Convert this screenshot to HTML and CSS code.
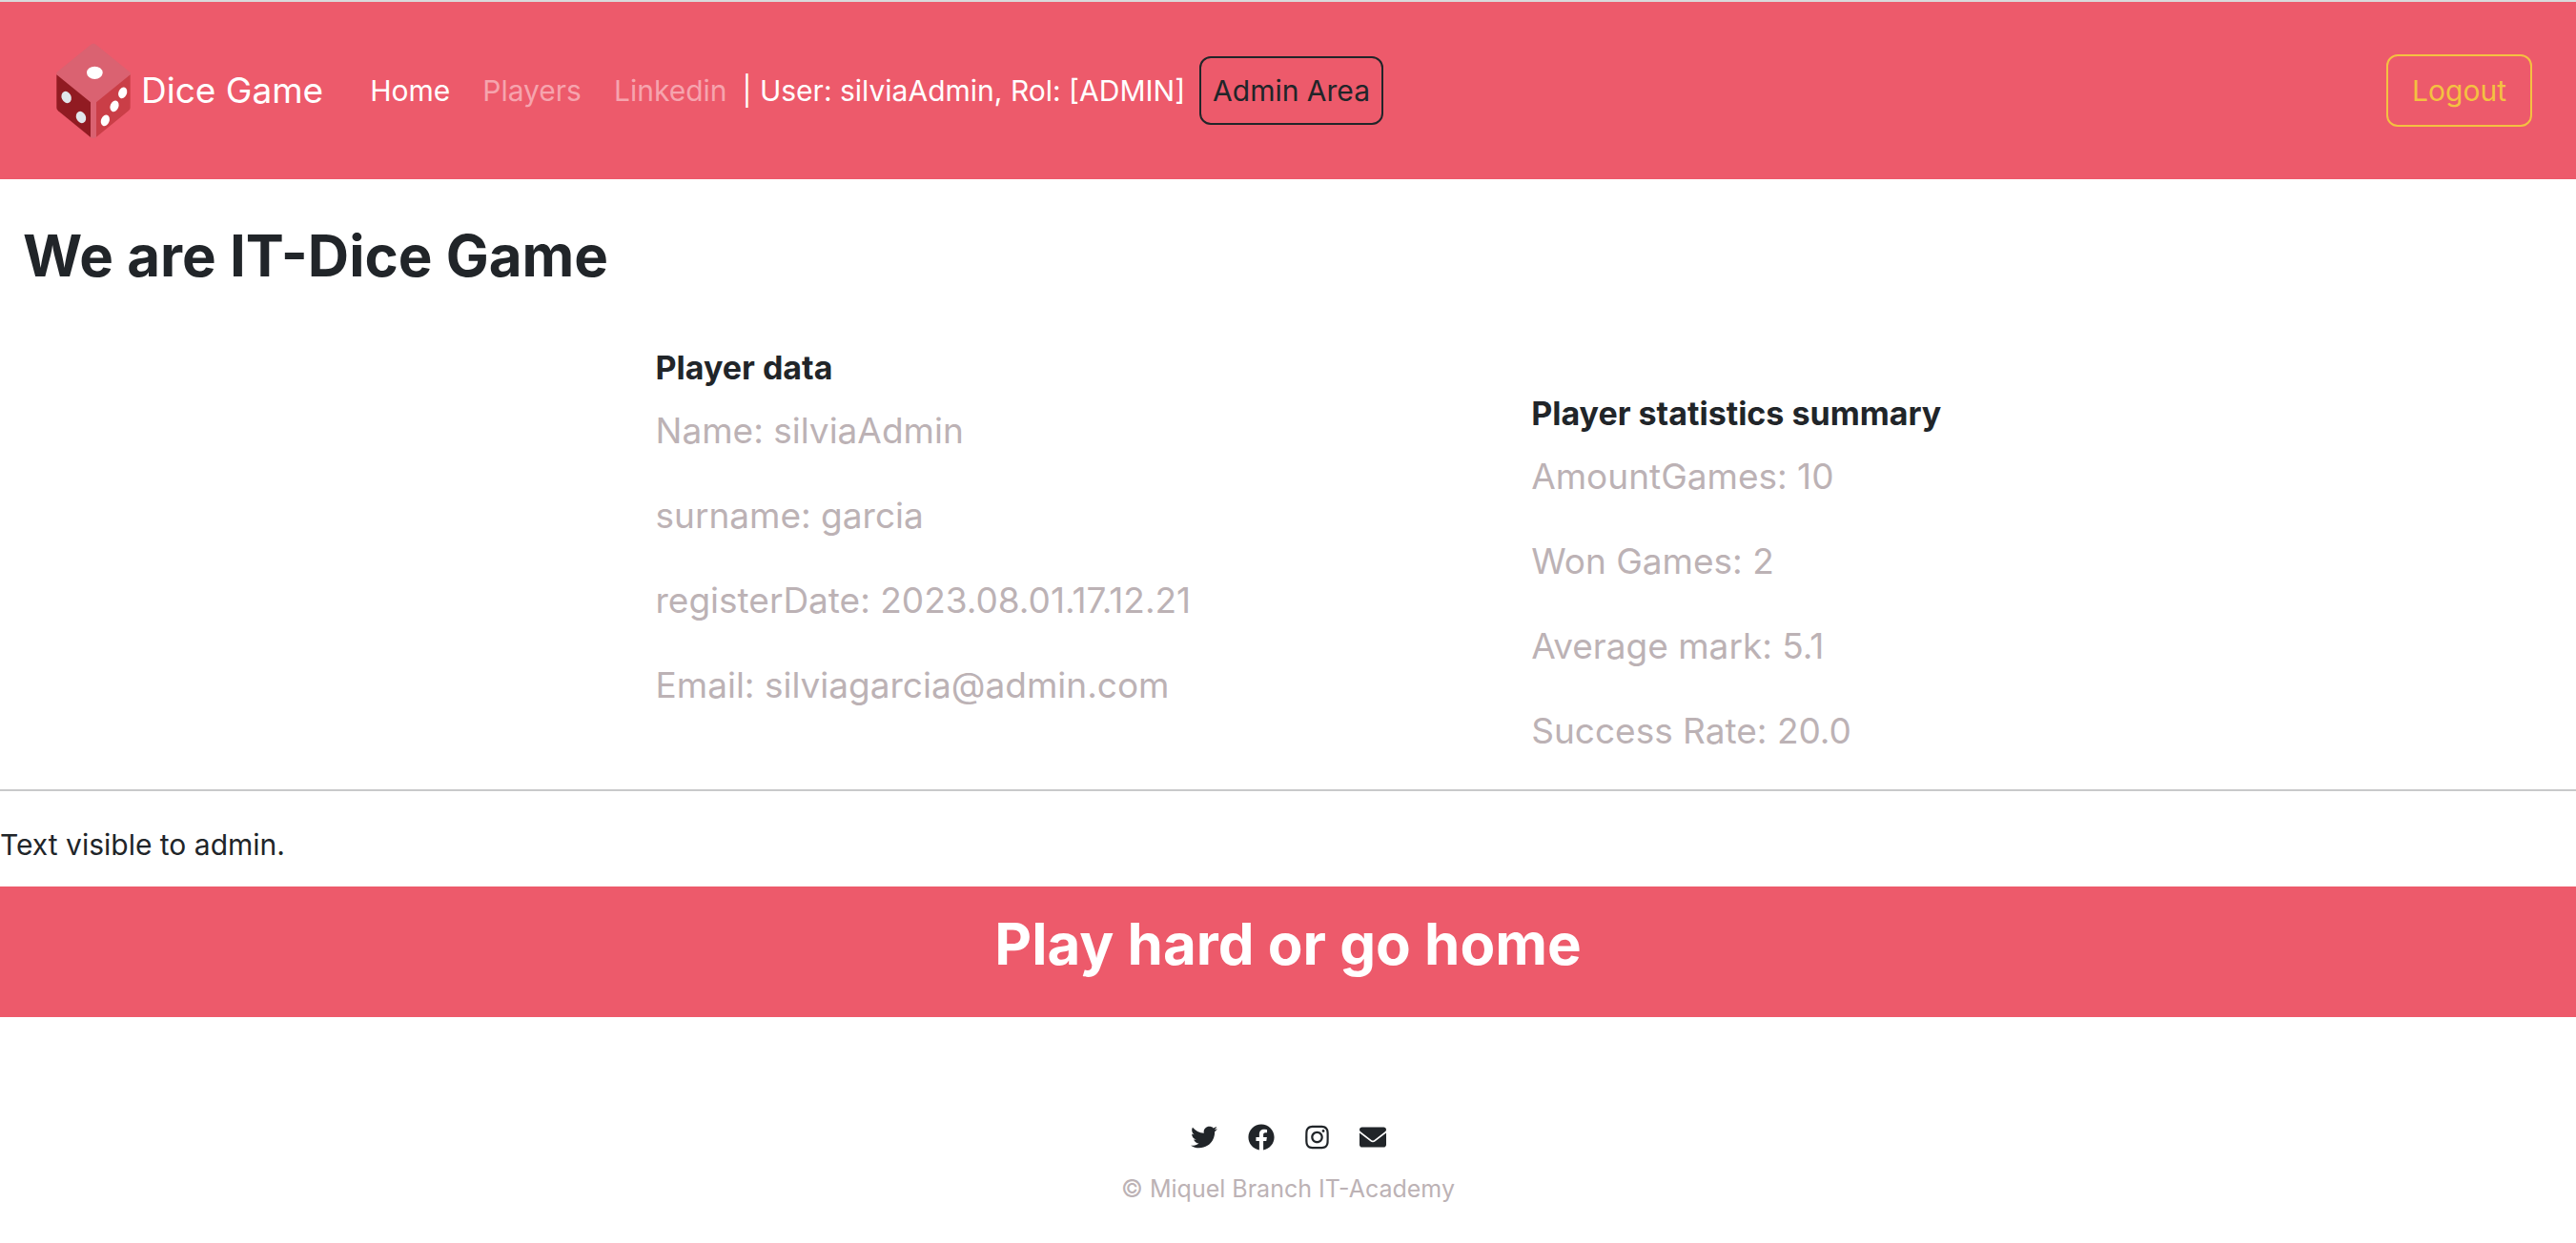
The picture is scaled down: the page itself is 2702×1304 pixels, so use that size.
FILE: index.html
```html
<!DOCTYPE html>
<html lang="en">
<head>
<meta charset="utf-8">
<meta name="viewport" content="width=device-width, initial-scale=1">
<title>Dice Game</title>
<link rel="stylesheet" href="styles.css">
</head>
<body>
<header class="navbar">
  <a class="brand" href="#">
    <svg class="dice" viewBox="0 0 240 300" aria-hidden="true">
      <path fill="#da6271" d="M112 5Q120 -1 128 5L236 93V102L129 190V297Q120 303 111 297V190L4 102V93Z"/>
      <path fill="#911b22" d="M4 100L111 187V297L9 214Q4 209 4 204Z"/>
      <path fill="#ca3e47" d="M236 100L129 187V296L231 213Q236 208 236 203Z"/>
      <ellipse cx="124" cy="94" rx="25" ry="20" fill="#fff"/>
      <g fill="#e1e6eb">
        <ellipse cx="35" cy="171" rx="15" ry="19" transform="rotate(-25 35 171)"/>
        <ellipse cx="81" cy="234" rx="15" ry="19" transform="rotate(-25 81 234)"/>
      </g>
      <g fill="#fff">
        <ellipse cx="212" cy="157" rx="13" ry="18" transform="rotate(22 212 157)"/>
        <ellipse cx="186" cy="199" rx="13" ry="18" transform="rotate(22 186 199)"/>
        <ellipse cx="157" cy="244" rx="13" ry="18" transform="rotate(22 157 244)"/>
      </g>
    </svg>
    <span>Dice Game</span>
  </a>
  <nav class="menu">
    <a class="menu-link active" href="#">Home</a>
    <a class="menu-link" href="#">Players</a>
    <a class="menu-link" href="#">Linkedin</a>
  </nav>
  <span class="user">| User: silviaAdmin, Rol: [ADMIN]</span>
  <a class="admin-link" href="#">Admin Area</a>
  <button class="logout" type="button">Logout</button>
</header>
<main>
  <h1 class="title">We are IT-Dice Game</h1>
  <div class="player">
    <section class="panel data">
      <h2>Player data</h2>
      <p>Name: silviaAdmin</p>
      <p>surname: garcia</p>
      <p>registerDate: 2023.08.01.17.12.21</p>
      <p>Email: silviagarcia@admin.com</p>
    </section>
    <section class="panel stats">
      <h2>Player statistics summary</h2>
      <p>AmountGames: 10</p>
      <p>Won Games: 2</p>
      <p>Average mark: 5.1</p>
      <p>Success Rate: 20.0</p>
    </section>
  </div>
  <hr>
  <p class="note">Text visible to admin.</p>
  <h2 class="banner">Play hard or go home</h2>
</main>
<footer class="footer">
  <div class="social">
    <a href="#" aria-label="Twitter"><svg viewBox="0 0 512 512"><path d="M459.37 151.716c.325 4.548.325 9.097.325 13.645 0 138.72-105.583 298.558-298.558 298.558-59.452 0-114.68-17.219-161.137-47.106 8.447.974 16.568 1.299 25.34 1.299 49.055 0 94.213-16.568 130.274-44.832-46.132-.975-84.792-31.188-98.112-72.772 6.498.974 12.995 1.624 19.818 1.624 9.421 0 18.843-1.3 27.614-3.573-48.081-9.747-84.143-51.98-84.143-102.985v-1.299c13.969 7.797 30.214 12.67 47.431 13.319-28.264-18.843-46.781-51.005-46.781-87.391 0-19.492 5.197-37.36 14.294-52.954 51.655 63.675 129.3 105.258 216.365 109.807-1.624-7.797-2.599-15.918-2.599-24.04 0-57.828 46.782-104.934 104.934-104.934 30.213 0 57.502 12.67 76.67 33.137 23.715-4.548 46.456-13.32 66.599-25.34-7.798 24.366-24.366 44.833-46.132 57.827 21.117-2.273 41.584-8.122 60.426-16.243-14.292 20.791-32.161 39.308-52.628 54.253z"/></svg></a>
    <a href="#" aria-label="Facebook"><svg viewBox="0 0 512 512"><path d="M504 256C504 119 393 8 256 8S8 119 8 256c0 123.78 90.69 226.38 209.25 245V327.69h-63V256h63v-54.64c0-62.15 37-96.48 93.67-96.48 27.14 0 55.52 4.84 55.52 4.84v61h-31.28c-30.8 0-40.41 19.12-40.41 38.73V256h68.78l-11 71.69h-57.78V501C413.31 482.38 504 379.78 504 256z"/></svg></a>
    <a href="#" aria-label="Instagram"><svg class="narrow" viewBox="0 0 448 512"><path d="M224.1 141c-63.6 0-114.9 51.3-114.9 114.9s51.3 114.9 114.9 114.9S339 319.5 339 255.9 287.7 141 224.1 141zm0 189.6c-41.1 0-74.7-33.5-74.7-74.7s33.5-74.7 74.7-74.7 74.7 33.5 74.7 74.7-33.6 74.7-74.7 74.7zm146.4-194.3c0 14.9-12 26.8-26.8 26.8-14.9 0-26.8-12-26.8-26.8s12-26.8 26.8-26.8 26.8 12 26.8 26.8zm76.1 27.2c-1.7-35.9-9.9-67.7-36.2-93.9-26.2-26.2-58-34.4-93.9-36.2-37-2.1-147.9-2.1-184.9 0-35.8 1.7-67.6 9.9-93.9 36.1s-34.4 58-36.2 93.9c-2.1 37-2.1 147.9 0 184.9 1.7 35.9 9.9 67.7 36.2 93.9s58 34.4 93.9 36.2c37 2.1 147.9 2.1 184.9 0 35.9-1.7 67.7-9.9 93.9-36.2 26.2-26.2 34.4-58 36.2-93.9 2.1-37 2.1-147.8 0-184.8zM398.8 388c-7.8 19.6-22.9 34.7-42.6 42.6-29.5 11.7-99.5 9-132.1 9s-102.7 2.6-132.1-9c-19.6-7.8-34.7-22.9-42.6-42.6-11.7-29.5-9-99.5-9-132.1s-2.6-102.7 9-132.1c7.8-19.6 22.9-34.7 42.6-42.6 29.5-11.7 99.5-9 132.1-9s102.7-2.6 132.1 9c19.6 7.8 34.7 22.9 42.6 42.6 11.7 29.5 9 99.5 9 132.1s2.7 102.7-9 132.1z"/></svg></a>
    <a href="#" aria-label="Email"><svg viewBox="0 0 512 512"><path d="M256 352c-16.53 0-33.06-5.422-47.16-16.41L0 173.2V400C0 426.5 21.49 448 48 448h416c26.51 0 48-21.49 48-48V173.2l-208.8 162.5C289.1 346.6 272.5 352 256 352zM16.29 145.3l212.2 165.1c16.19 12.6 38.87 12.6 55.06 0l212.2-165.1C505.1 137.3 512 125 512 112C512 85.49 490.5 64 464 64h-416C21.49 64 0 85.49 0 112C0 125 6.01 137.3 16.29 145.3z"/></svg></a>
  </div>
  <p class="copyright">© Miquel Branch IT-Academy</p>
</footer>
</body>
</html>
```

FILE: styles.css
```css
* { box-sizing: border-box; }
body {
  margin: 0;
  background: #fff;
  color: #212529;
  font-family: Inter, "Liberation Sans", sans-serif;
  font-size: 30px;
  line-height: 48px;
}
h1, h2, p { margin: 0; }
a { color: inherit; text-decoration: none; }

.navbar {
  display: flex;
  align-items: center;
  height: 188px;
  padding: 0 46px 0 58px;
  border-top: 2px solid #d9dadb;
  background: #ed5a6b;
  color: #fff;
  white-space: nowrap;
}
.brand {
  display: flex;
  align-items: center;
  gap: 10px;
  margin-right: 33px;
  font-size: 37px;
}
.dice { width: 80px; height: 100px; }
.menu { display: flex; gap: 2px; }
.menu-link { padding: 16px; color: #f6a4ae; }
.menu-link.active { color: #fff; }
.admin-link {
  margin-left: 15px;
  padding: 10px 12px;
  border: 2px solid #212529;
  border-radius: 12px;
  color: #212529;
}
.logout {
  margin-left: auto;
  padding: 12px 25px;
  border: 2px solid #f4c141;
  border-radius: 12px;
  background: transparent;
  color: #f4c141;
  font: inherit;
}

.title {
  padding: 46px 24px 50px;
  font-size: 60px;
  line-height: 68px;
  font-weight: 700;
}
.player {
  display: grid;
  grid-template-columns: 25% 34% 1fr;
  padding: 14px 0 2px;
}
.panel { padding-left: 12px; }
.data { grid-column: 2; }
.stats { padding-top: 48px; }
.panel h2 {
  margin-bottom: 16px;
  font-size: 34px;
  line-height: 40px;
  font-weight: 700;
}
.panel p {
  padding-bottom: 29px;
  color: #bcb2b5;
  font-size: 37px;
  line-height: 60px;
}
hr {
  height: 2px;
  margin: 0;
  border: 0;
  background: #c8c9ca;
}
.note { padding: 32px 0 20px; }
.banner {
  padding: 26px 24px 43px;
  background: #ed5a6b;
  color: #fff;
  font-size: 60px;
  line-height: 68px;
  text-align: center;
}
.footer { padding: 112px 24px 32px; }
.social {
  display: flex;
  justify-content: center;
  gap: 32px;
}
.social a { display: flex; }
.social svg { width: 28px; height: 28px; fill: #212529; }
.social .narrow { width: 25px; }
.copyright {
  padding-top: 20px;
  color: #bcb2b5;
  font-size: 25px;
  line-height: 40px;
  text-align: center;
}
```
